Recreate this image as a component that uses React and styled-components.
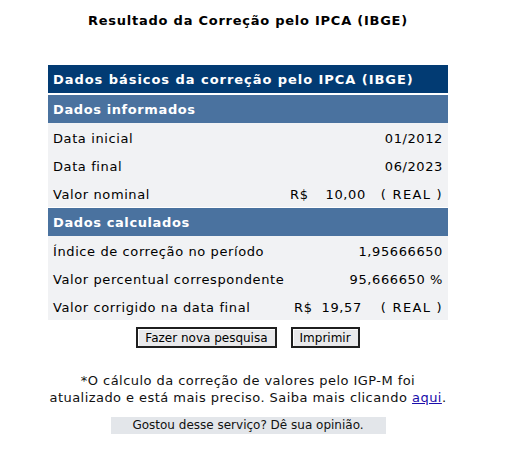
import styled, { createGlobalStyle } from "styled-components";

const GlobalStyle = createGlobalStyle`
  body {
    margin: 0;
    background: #ffffff;
    font-family: Verdana, "DejaVu Sans", sans-serif;
    color: #000;
  }
`;

const Page = styled.div`
  width: 496px;
  display: flex;
  flex-direction: column;
  align-items: center;
`;

const Title = styled.h1`
  margin: 13px 0 0;
  font-size: 13px;
  line-height: 16px;
  font-weight: bold;
  letter-spacing: 0.75px;
`;

const Table = styled.div`
  width: 400px;
  margin-top: 36px;
  display: flex;
  flex-direction: column;
`;

const Bar = styled.div`
  height: 28px;
  display: flex;
  align-items: center;
  padding: 1px 0 0 5px;
  box-sizing: border-box;
  color: #ffffff;
  font-weight: bold;
  font-size: 13px;
  letter-spacing: ${(p) => (p.$dark ? "0.95px" : "0.6px")};
  background: ${(p) => (p.$dark ? "#023b73" : "#4a729f")};
  margin-bottom: ${(p) => (p.$dark ? "2px" : "0")};
  margin-top: ${(p) => p.$top || "0"};
`;

const Rows = styled.div`
  background: #f1f2f4;
  display: flex;
  flex-direction: column;
`;

const Row = styled.div`
  height: 28px;
  box-sizing: border-box;
  display: flex;
  align-items: center;
  justify-content: space-between;
  padding: 3px 5px 0 5px;
  font-size: 13px;
  letter-spacing: 0.6px;
`;

const Value = styled.div`
  display: flex;
  align-items: center;
`;

const Piece = styled.span`
  margin-left: ${(p) => p.$gap || "0"};
  letter-spacing: ${(p) => (p.$wide ? "1.3px" : "inherit")};
`;

const Buttons = styled.div`
  margin-top: 7px;
  display: flex;
  gap: 14px;
`;

const Button = styled.button`
  height: 21px;
  padding: 0 7px;
  font-family: Verdana, "DejaVu Sans", sans-serif;
  font-size: 12px;
  background: #e9e9eb;
  color: #000;
  border: 2px solid #1f1f1f;
  box-shadow: inset 1px 1px 0 #ffffff;
  cursor: pointer;
`;

const Note = styled.p`
  margin: 24px 0 0;
  font-size: 13px;
  line-height: 17px;
  letter-spacing: 0.45px;
  text-align: center;
  color: #111;
`;

const Link = styled.a`
  color: #1a0dab;
  text-decoration: underline;
`;

const Feedback = styled.div`
  margin-top: 11px;
  width: 275px;
  height: 17px;
  background: #e3e6ea;
  font-size: 12px;
  line-height: 17px;
  text-align: center;
  color: #111;
`;

export default function App() {
  return (
    <Page>
      <GlobalStyle />
      <Title>Resultado da Correção pelo IPCA (IBGE)</Title>
      <Table>
        <Bar $dark>Dados básicos da correção pelo IPCA (IBGE)</Bar>
        <Bar>Dados informados</Bar>
        <Rows>
          <Row>
            <span>Data inicial</span>
            <span>01/2012</span>
          </Row>
          <Row>
            <span>Data final</span>
            <span>06/2023</span>
          </Row>
          <Row>
            <span>Valor nominal</span>
            <Value>
              <Piece>R$</Piece>
              <Piece $gap="17px">10,00</Piece>
              <Piece $gap="15px" $wide>( REAL )</Piece>
            </Value>
          </Row>
        </Rows>
        <Bar $top="1px">Dados calculados</Bar>
        <Rows>
          <Row>
            <span>Índice de correção no período</span>
            <span>1,95666650</span>
          </Row>
          <Row>
            <span>Valor percentual correspondente</span>
            <span>95,666650 %</span>
          </Row>
          <Row>
            <span>Valor corrigido na data final</span>
            <Value>
              <Piece>R$</Piece>
              <Piece $gap="9px">19,57</Piece>
              <Piece $gap="19px" $wide>( REAL )</Piece>
            </Value>
          </Row>
        </Rows>
      </Table>
      <Buttons>
        <Button>Fazer nova pesquisa</Button>
        <Button>Imprimir</Button>
      </Buttons>
      <Note>
        *O cálculo da correção de valores pelo IGP-M foi
        <br />
        atualizado e está mais preciso. Saiba mais clicando <Link href="#">aqui</Link>.
      </Note>
      <Feedback>Gostou desse serviço? Dê sua opinião.</Feedback>
    </Page>
  );
}
